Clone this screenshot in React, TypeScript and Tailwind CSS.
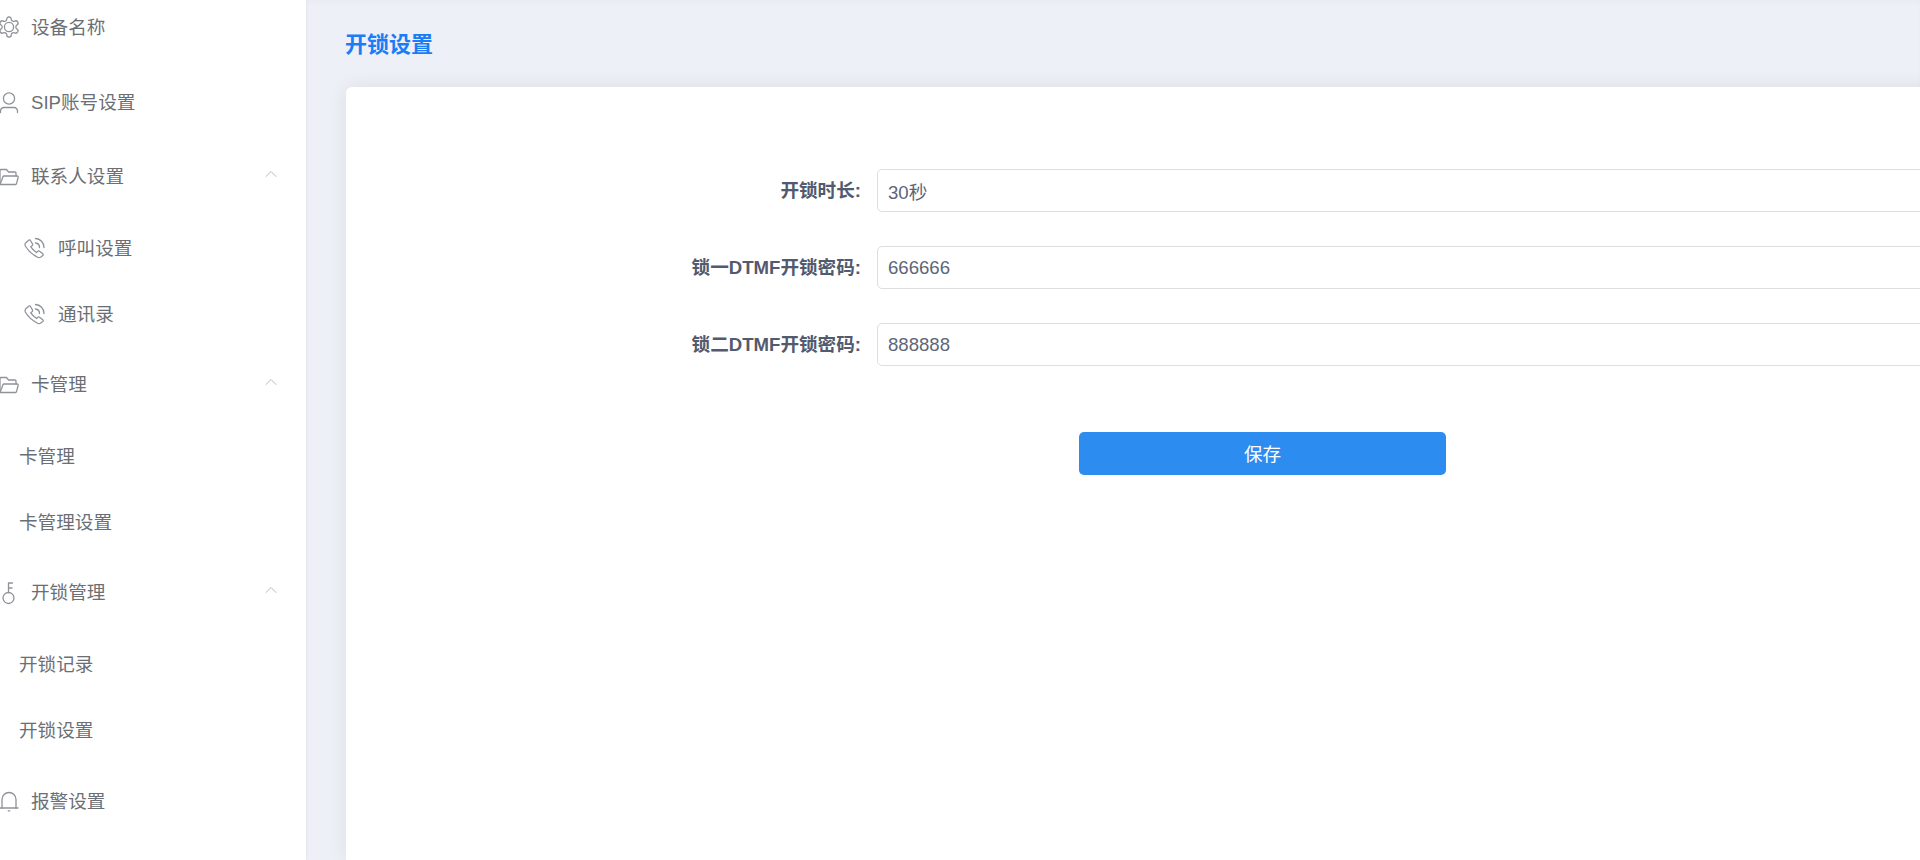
import { ChevronUp } from "lucide-react";
import type { ReactNode } from "react";

const font = "[font-family:'Liberation_Sans','Noto_Sans_CJK_SC',sans-serif]";

function Icon({ children }: { children: ReactNode }) {
  return (
    <svg viewBox="0 0 24 24" width="24" height="24" fill="none" stroke="currentColor" strokeWidth="1.3" strokeLinecap="round" strokeLinejoin="round" className="shrink-0 overflow-visible text-[#8f9398]">
      {children}
    </svg>
  );
}

const GearIcon = () => (
  <Icon>
    <path d="M12.22 2h-.44a2 2 0 0 0-2 2v.18a2 2 0 0 1-1 1.73l-.43.25a2 2 0 0 1-2 0l-.15-.08a2 2 0 0 0-2.73.73l-.22.38a2 2 0 0 0 .73 2.73l.15.1a2 2 0 0 1 1 1.72v.51a2 2 0 0 1-1 1.74l-.15.09a2 2 0 0 0-.73 2.73l.22.38a2 2 0 0 0 2.73.73l.15-.08a2 2 0 0 1 2 0l.43.25a2 2 0 0 1 1 1.73V20a2 2 0 0 0 2 2h.44a2 2 0 0 0 2-2v-.18a2 2 0 0 1 1-1.73l.43-.25a2 2 0 0 1 2 0l.15.08a2 2 0 0 0 2.73-.73l.22-.39a2 2 0 0 0-.73-2.73l-.15-.08a2 2 0 0 1-1-1.74v-.5a2 2 0 0 1 1-1.74l.15-.09a2 2 0 0 0 .73-2.73l-.22-.38a2 2 0 0 0-2.73-.73l-.15.08a2 2 0 0 1-2 0l-.43-.25a2 2 0 0 1-1-1.73V4a2 2 0 0 0-2-2z" />
    <circle cx="12" cy="12" r="4.6" />
  </Icon>
);

const UserIcon = () => (
  <Icon>
    <circle cx="12" cy="8.5" r="5.6" />
    <path d="M3.5 22.5V21a3.5 3.5 0 0 1 3.5-3.5h10a3.5 3.5 0 0 1 3.5 3.5v1.5" />
  </Icon>
);

const FolderIcon = () => (
  <Icon>
    <path d="M3 20.5V6.5a1 1 0 0 1 1-1h5.5l2 2.5h6.5a1 1 0 0 1 1 1V12" />
    <path d="M3 20.5h15.5a1 1 0 0 0 1-.8l1.7-6.5a1 1 0 0 0-1-1.2H7a1 1 0 0 0-1 .8L3 20.5z" />
  </Icon>
);

const PhoneIcon = () => (
  <Icon>
    <path d="M3.5 7 7 4q1-.5 1.5.5l2 3.5q.5 1-.5 1.8l-1.3.9q2.3 3.8 5.8 5.8l1.3-1.2q.9-.8 1.8-.1l3.2 2.6q.9.8 0 1.7l-2.3 1.7q-1.5.8-3 0Q7.5 17 3.3 10q-.7-1.7.2-3z" />
    <path d="M13.5 7a4.5 4.5 0 0 1 4 4.5" />
    <path d="M13.5 2.5a9 9 0 0 1 8.5 9" />
  </Icon>
);

const KeyIcon = () => (
  <Icon>
    <circle cx="11.5" cy="18" r="5.5" />
    <path d="M11.5 12.5V3h4M11.5 8h3.5" />
  </Icon>
);

const BellIcon = () => (
  <Icon>
    <path d="M5 19V10.5a7 7 0 0 1 14 0V19" />
    <path d="M3 19h18" />
    <path d="M11.2 21.8h1.6" />
  </Icon>
);

function TopRow({ icon, label, chevron, className = "" }: { icon: ReactNode; label: string; chevron?: boolean; className?: string }) {
  return (
    <div className={`-ml-[3px] flex h-[66px] items-center gap-[10px] ${className}`}>
      {icon}
      <span className="pt-[1px]">{label}</span>
      {chevron && <ChevronUp size={20} strokeWidth={1} className="mr-[25px] ml-auto -translate-y-[2px] text-[#a9adb3]" />}
    </div>
  );
}

function PhoneRow({ label, className = "" }: { label: string; className?: string }) {
  return (
    <div className={`flex h-[66px] items-center gap-[12px] pl-[22px] ${className}`}>
      <PhoneIcon />
      <span className="pt-[1px]">{label}</span>
    </div>
  );
}

function SubRow({ label, className = "" }: { label: string; className?: string }) {
  return (
    <div className={`flex h-[66px] items-center pl-[19px] ${className}`}>
      <span className="pt-[1px]">{label}</span>
    </div>
  );
}

function Field({ label, value }: { label: string; value: string }) {
  return (
    <div className="flex items-center">
      <label className="w-[361px] shrink-0 pt-[1px] pr-[16px] text-right text-[18.6px] font-bold text-[#515a6e]">{label}</label>
      <input readOnly value={value} className="h-[43px] w-[1300px] shrink-0 rounded-[5px] border border-[#dcdee2] bg-white px-[10px] text-[18.6px] text-[#5d6679] outline-none" />
    </div>
  );
}

export default function App() {
  return (
    <div className={`flex h-[860px] w-[1920px] overflow-hidden bg-[#edf0f6] ${font}`}>
      <aside className="-mt-[6px] h-[866px] w-[306px] shrink-0 bg-white text-[18.6px] text-[#6b6f75] shadow-[0_0_4px_rgba(0,0,0,0.06)]">
        <TopRow icon={<GearIcon />} label="设备名称" />
        <TopRow className="mt-[9px]" icon={<UserIcon />} label="SIP账号设置" />
        <TopRow className="mt-[8px]" icon={<FolderIcon />} chevron label="联系人设置" />
        <PhoneRow className="mt-[6px]" label="呼叫设置" />
        <PhoneRow label="通讯录" />
        <TopRow className="mt-[4px]" icon={<FolderIcon />} chevron label="卡管理" />
        <SubRow className="mt-[6px]" label="卡管理" />
        <SubRow label="卡管理设置" />
        <TopRow className="mt-[4px]" icon={<KeyIcon />} chevron label="开锁管理" />
        <SubRow className="mt-[6px]" label="开锁记录" />
        <SubRow label="开锁设置" />
        <TopRow className="mt-[5px]" icon={<BellIcon />} label="报警设置" />
      </aside>
      <main className="flex min-w-0 flex-1 flex-col pl-[40px] shadow-[inset_0_3px_4px_rgba(0,0,0,0.02)]">
        <h1 className="mt-[30px] -ml-[1px] h-[57px] text-[22px] leading-[30px] font-bold text-[#1a7df5]">开锁设置</h1>
        <section className="w-[1640px] flex-1 rounded-t-[6px] bg-white pt-[82px] shadow-[0_0_20px_rgba(0,0,0,0.08)]">
          <div className="flex flex-col gap-[34px] pl-[170px]">
            <Field label="开锁时长:" value="30秒" />
            <Field label="锁一DTMF开锁密码:" value="666666" />
            <Field label="锁二DTMF开锁密码:" value="888888" />
          </div>
          <button className="mt-[66px] ml-[733px] h-[43px] w-[367px] rounded-[5px] bg-[#2d8cf0] pt-[2px] text-[18.6px] text-white">保存</button>
        </section>
      </main>
    </div>
  );
}
